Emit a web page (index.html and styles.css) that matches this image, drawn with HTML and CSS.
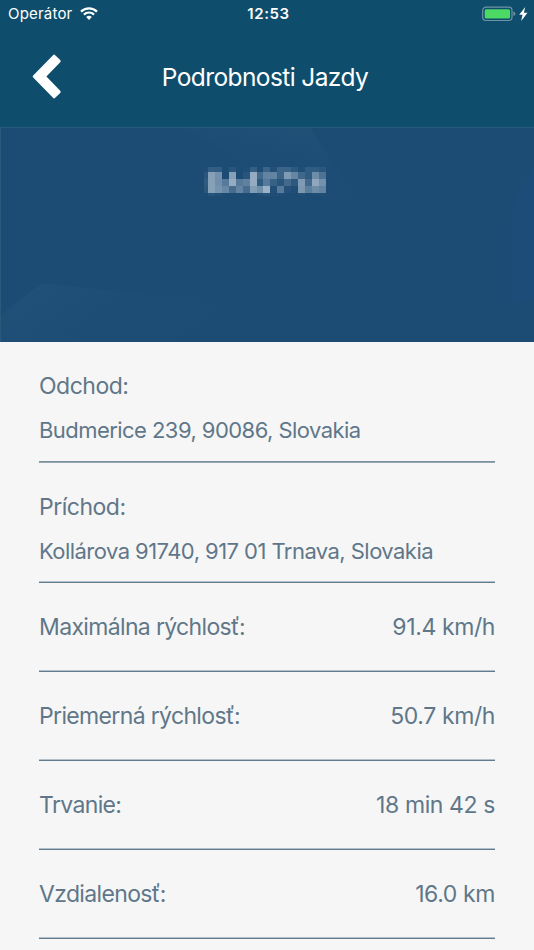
FILE: index.html
```
<!DOCTYPE html>
<html lang="sk">

<head>
    <meta charset="UTF-8">
    <title>Podrobnosti Jazdy</title>
    <link rel="stylesheet" href="styles.css">
</head>

<body>
    <!-- Header -->
    <header class="header">
        <div class="status-bar">
            <div class="carrier">
                <span>Operátor</span>
                <svg class="wifi" width="18" height="13" viewBox="0 0 18 13">
                    <path d="M1 4.6a11.4 11.4 0 0 1 16 0M3.9 7.6a7.3 7.3 0 0 1 10.2 0" fill="none" stroke="#fff" stroke-width="2.2" />
                    <path d="M9 13L6.2 10.1a4 4 0 0 1 5.6 0z" fill="#fff" />
                </svg>
            </div>
            <span class="clock">12:53</span>
            <svg class="battery" width="47" height="16" viewBox="0 0 47 16">
                <rect x=".7" y="1.2" width="29.3" height="13.3" rx="3.2" fill="none" stroke="#6f94a8" stroke-width="1.2" />
                <rect x="2.7" y="3.2" width="25.4" height="9.3" rx="1.5" fill="#4cd964" />
                <path d="M31.4 5.5q2 .4 2 2.3t-2 2.3z" fill="#6f94a8" />
                <path d="M43.2 1L37.2 8.8h3.3l-1.3 6.2 6.3-8.3h-3.6z" fill="#fff" />
            </svg>
        </div>
        <div class="nav-bar">
            <a class="back" href="#" aria-label="Späť">
                <svg width="30" height="46" viewBox="0 0 30 46">
                    <path d="M21 1.2a1.5 1.5 0 0 1 2.2 0l5 4.9a1.5 1.5 0 0 1 0 2.2L14.4 22.5l13.8 14.2a1.5 1.5 0 0 1 0 2.2l-5 4.9a1.5 1.5 0 0 1-2.2 0L1.2 23.6a1.5 1.5 0 0 1 0-2.2z" fill="#fff" />
                </svg>
            </a>
            <h1 class="title">Podrobnosti Jazdy</h1>
        </div>
    </header>

    <!-- Car banner with the obscured plate -->
    <section class="banner">
        <svg class="facets" width="534" height="215" viewBox="0 0 534 215">
            <defs>
                <linearGradient id="corner" x1="0" y1="0" x2="1" y2="0.3">
                    <stop offset="0" stop-color="#25567a" stop-opacity=".6" />
                    <stop offset="1" stop-color="#1c4b74" stop-opacity="0" />
                </linearGradient>
                <linearGradient id="ray" x1="1" y1="0" x2=".6" y2=".8">
                    <stop offset="0" stop-color="#265878" stop-opacity=".6" />
                    <stop offset="1" stop-color="#1c4b78" stop-opacity="0" />
                </linearGradient>
                <linearGradient id="edge" x1="1" y1="0" x2="0" y2="0">
                    <stop offset="0" stop-color="#1c4d7c" stop-opacity=".8" />
                    <stop offset="1" stop-color="#1c4b74" stop-opacity="0" />
                </linearGradient>
            </defs>
            <path d="M0 189L42 156L252 180L280 215H0z" fill="url(#corner)" />
            <path d="M180 0H310L367 92L300 60z" fill="url(#ray)" />
            <path d="M534 40V170L480 189L510 80z" fill="url(#edge)" />
            <path d="M0 .5H534M.5 0V215" stroke="#285a7c" />
        </svg>
        <svg class="plate" width="124" height="30" viewBox="0 0 124 30"></svg>
    </section>

    <!-- Ride details -->
    <main class="details">
        <div class="place">
            <h2 class="label">Odchod:</h2>
            <p class="address">Budmerice 239, 90086, Slovakia</p>
        </div>
        <div class="place">
            <h2 class="label">Príchod:</h2>
            <p class="address">Kollárova 91740, 917 01 Trnava, Slovakia</p>
        </div>
        <div class="row"><span>Maximálna rýchlosť:</span><span class="value">91.4 km/h</span></div>
        <div class="row"><span>Priemerná rýchlosť:</span><span class="value">50.7 km/h</span></div>
        <div class="row"><span>Trvanie:</span><span class="value">18 min 42 s</span></div>
        <div class="row"><span>Vzdialenosť:</span><span class="value">16.0 km</span></div>
    </main>

    <script>
        // Brightness (0 - 100) of every block of the plate mosaic
        const mosaic = [
            { y: 0, height: 5, cells: [3, 18, 16, 0, 10, 0, 2, 18, 2, 22, 4, 22, 22, 12, 2, 14, 14, 10] },
            { y: 5, height: 7, cells: [10, 75, 62, 0, 75, 0, 8, 85, 28, 50, 50, 22, 70, 52, 25, 15, 58, 35] },
            { y: 12, height: 7, cells: [14, 75, 60, 42, 85, 42, 48, 85, 14, 42, 20, 10, 28, 12, 70, 28, 82, 62] },
            { y: 19, height: 7, cells: [12, 75, 65, 55, 30, 50, 30, 72, 60, 90, 4, 42, 5, 2, 68, 45, 58, 50] },
            { y: 26, height: 3, cells: [0, 8, 4, 0, 0, 0, 0, 0, 4, 8, 2, 4, 0, 0, 4, 0, 2, 2] }
        ];
        const plate = document.querySelector('.plate');

        mosaic.forEach(line => {
            line.cells.forEach((value, i) => {
                const rect = document.createElementNS('http://www.w3.org/2000/svg', 'rect');
                const x = i === 0 ? 0 : Math.round(4 + (i - 1) * 6.93);
                rect.setAttribute('x', x);
                rect.setAttribute('y', line.y);
                rect.setAttribute('width', Math.round(4 + i * 6.93) - x);
                rect.setAttribute('height', line.height);
                rect.setAttribute('fill', '#a9bccf');
                rect.setAttribute('fill-opacity', value / 100);
                plate.appendChild(rect);
            });
        });
    </script>
</body>

</html>
```

FILE: styles.css
```
* {
    box-sizing: border-box;
}

body {
    margin: 0;
    height: 950px;
    overflow: hidden;
    background-color: #f6f6f6;
    color: #607789;
    font-family: Inter, sans-serif;
}

.header {
    height: 127px;
    background-color: #0e4d6b;
    color: white;
}

.status-bar {
    display: grid;
    grid-template-columns: 1fr auto 1fr;
    align-items: center;
    height: 27px;
    padding: 0 5px 0 8px;
    font-size: 15px;
    letter-spacing: 0.2px;
}

.carrier {
    display: flex;
    align-items: center;
    gap: 8px;
}

.clock {
    font-weight: 600;
    letter-spacing: 0.6px;
}

.battery {
    justify-self: end;
}

.nav-bar {
    display: grid;
    grid-template-columns: 60px 1fr 60px;
    align-items: center;
    height: 100px;
    padding: 0 8px 0 4px;
}

.back {
    display: flex;
    padding-left: 28px;
}

.title {
    margin: 0;
    font-size: 24.5px;
    font-weight: 400;
    letter-spacing: -0.6px;
    text-align: center;
}

.banner {
    position: relative;
    display: flex;
    justify-content: center;
    align-items: flex-start;
    height: 215px;
    padding-top: 40px;
    background-color: #1c4b74;
}

.facets {
    position: absolute;
    top: 0;
    left: 0;
}

.plate {
    position: relative;
    margin-right: 2px;
}

.details {
    padding: 0 39px;
}

.place {
    height: 120.5px;
    padding-top: 30px;
    border-bottom: 1px solid #607d90;
    box-shadow: inset 0 -1px #b4c0c9;
}

.place:first-child {
    border-bottom-color: #95a6b2;
    box-shadow: inset 0 -1px #7b909f;
}

.label {
    margin: 0;
    font-size: 23px;
    font-weight: 400;
    letter-spacing: -0.5px;
    line-height: 28px;
}

.address {
    margin: 16px 0 0;
    font-size: 22px;
    letter-spacing: -0.55px;
    line-height: 28px;
}

.row {
    display: flex;
    justify-content: space-between;
    align-items: center;
    height: 89px;
    border-bottom: 1px solid #607d90;
    box-shadow: inset 0 -1px #b4c0c9;
    font-size: 23px;
    letter-spacing: -0.65px;
}

.value {
    letter-spacing: -0.4px;
}
```
